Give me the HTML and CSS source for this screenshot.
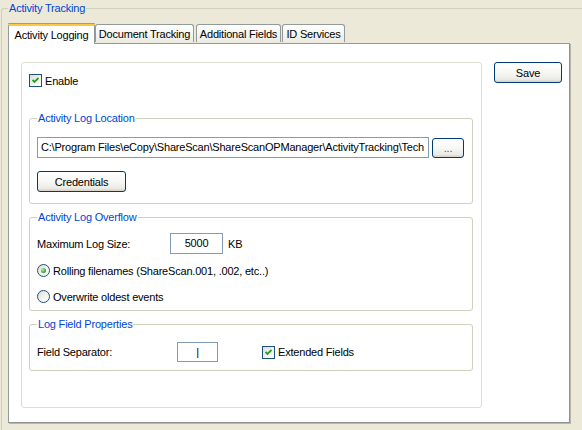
FILE: index.html
```html
<!DOCTYPE html>
<html lang="en">
<head>
    <meta charset="UTF-8">
    <title>Activity Tracking</title>
    <link rel="stylesheet" href="styles.css">
</head>
<body>
    <fieldset class="outer">
        <legend>Activity Tracking</legend>

        <div class="tabs">
            <div class="tab active">Activity Logging</div>
            <div class="tab tab-doc">Document Tracking</div>
            <div class="tab tab-add">Additional Fields</div>
            <div class="tab tab-id">ID Services</div>
        </div>

        <div class="panel">
            <div class="main-group">
                <label class="check-row enable-row">
                    <span class="checkbox checked">
                        <svg width="7" height="7" viewBox="0 0 7 7"><path d="M0.5 3 L2.5 5 L6.5 1" fill="none" stroke="#21a121" stroke-width="1.8"/></svg>
                    </span>
                    Enable
                </label>

                <fieldset class="group loc-group">
                    <legend>Activity Log Location</legend>
                    <div class="path-row">
                        <div class="textbox path">C:\Program Files\eCopy\ShareScan\ShareScanOPManager\ActivityTracking\Tech</div>
                        <button class="xp-btn dots">...</button>
                    </div>
                    <button class="xp-btn cred">Credentials</button>
                </fieldset>

                <fieldset class="group overflow-group">
                    <legend>Activity Log Overflow</legend>
                    <div class="size-row">
                        <span class="size-label">Maximum Log Size:</span>
                        <div class="textbox size">5000</div>
                        <span class="unit">KB</span>
                    </div>
                    <label class="radio-row first">
                        <span class="radio on"></span>
                        Rolling filenames (ShareScan.001, .002, etc..)
                    </label>
                    <label class="radio-row second">
                        <span class="radio"></span>
                        Overwrite oldest events
                    </label>
                </fieldset>

                <fieldset class="group field-group">
                    <legend>Log Field Properties</legend>
                    <div class="sep-row">
                        <span class="sep-label">Field Separator:</span>
                        <div class="textbox sep">|</div>
                        <label class="check-row ext">
                            <span class="checkbox checked">
                                <svg width="7" height="7" viewBox="0 0 7 7"><path d="M0.5 3 L2.5 5 L6.5 1" fill="none" stroke="#21a121" stroke-width="1.8"/></svg>
                            </span>
                            Extended Fields
                        </label>
                    </div>
                </fieldset>
            </div>

            <button class="xp-btn save">Save</button>
        </div>
    </fieldset>
</body>
</html>
```

FILE: styles.css
```css
body {
    margin: 0;
    padding: 0;
    background-color: #ece9d8;
    font-family: "Liberation Sans", Arial, sans-serif;
    font-size: 11px;
    letter-spacing: -0.2px;
    color: #000;
    overflow: hidden;
}

/* group boxes */
fieldset {
    margin: 0;
    min-width: 0;
}

legend {
    color: #0046d5;
    line-height: 13px;
    padding: 0 1px;
}

.outer {
    margin: 2px 0 0 1px;
    padding: 8px 0 0 6px;
    border: 1px solid #d0d0bf;
    border-right: none;
    border-bottom: none;
    border-top-left-radius: 3px;
    height: 500px;
}

.outer > legend {
    margin-left: 0;
}

/* tabs */
.tabs {
    display: flex;
    align-items: flex-end;
    height: 20px;
    position: relative;
    z-index: 1;
}

.tab {
    height: 18px;
    line-height: 18px;
    box-sizing: border-box;
    border: 1px solid #919b9c;
    border-bottom: none;
    border-radius: 3px 3px 0 0;
    background: linear-gradient(#ffffff, #f3f3ef 60%, #ecebe5);
    text-align: center;
    margin-bottom: 1px;
}

.tab.active {
    width: 87px;
    height: 21px;
    line-height: 19px;
    background: #fff;
    border-top: 3px solid #ffc83c;
    margin-bottom: -1px;
    position: relative;
}

.tab.active::before {
    content: "";
    position: absolute;
    left: -1px;
    right: -1px;
    top: -3px;
    height: 1px;
    background: #e68b2c;
    border-radius: 3px 3px 0 0;
}

.tab-doc { width: 99px; }
.tab-add { width: 85px; margin-left: 2px; }
.tab-id { width: 63px; margin-left: 1px; }

.panel {
    width: 562px;
    height: 380px;
    box-sizing: border-box;
    background: #fff;
    border: 1px solid #919b9c;
    border-right-color: #8d9294;
    border-bottom-color: #8d9294;
    box-shadow: 1px 1px 0 #b8b6aa;
    display: flex;
    align-items: flex-start;
    padding: 18px 0 0 12px;
}

/* main group */
.main-group {
    width: 461px;
    height: 346px;
    box-sizing: border-box;
    border: 1px solid #dfddcf;
    border-radius: 3px;
    padding: 11px 8px 0 7px;
}

.check-row {
    display: flex;
    align-items: center;
    gap: 3px;
    height: 13px;
}

.checkbox {
    width: 13px;
    height: 13px;
    box-sizing: border-box;
    border: 1px solid #1c5180;
    background: linear-gradient(135deg, #dcdcd6, #f5f5f3 60%, #ffffff);
    display: flex;
    align-items: center;
    justify-content: center;
}

.enable-row {
    margin-bottom: 25px;
}

.group {
    border: 1px solid #d0d0bf;
    border-radius: 3px;
    padding: 0 7px;
    width: 444px;
    box-sizing: border-box;
}

.group > legend {
    margin-left: 0;
}

.loc-group {
    padding-top: 12px;
    padding-bottom: 11px;
}

.path-row {
    display: flex;
    align-items: center;
    gap: 3px;
    margin-bottom: 13px;
}

.textbox {
    box-sizing: border-box;
    border: 1px solid #7f9db9;
    background: #fff;
    height: 21px;
    line-height: 19px;
    white-space: nowrap;
    overflow: hidden;
}

.path {
    width: 392px;
    padding-left: 3px;
}

.xp-btn {
    font-family: inherit;
    font-size: 11px;
    letter-spacing: -0.2px;
    color: #000;
    border: 1px solid #003c74;
    border-radius: 3px;
    background: linear-gradient(#ffffff, #f7f7f4 50%, #ecebe6 85%, #d6d0c5);
    padding: 0;
    height: 21px;
    box-sizing: border-box;
    display: block;
}

.dots {
    width: 32px;
    height: 20px;
    color: #555;
}

.cred {
    width: 89px;
}

.overflow-group {
    margin-top: 7px;
    padding-top: 9px;
    padding-bottom: 7px;
}

.size-row {
    display: flex;
    align-items: center;
    height: 21px;
}

.size-label {
    width: 133px;
}

.size {
    width: 53px;
    text-align: center;
}

.unit {
    margin-left: 5px;
}

.radio-row {
    display: flex;
    align-items: center;
    gap: 3px;
    height: 13px;
}

.radio-row.first {
    margin-top: 10px;
}

.radio-row.second {
    margin-top: 13px;
}

.radio {
    width: 13px;
    height: 13px;
    box-sizing: border-box;
    border: 1px solid #1c5180;
    border-radius: 50%;
    background: linear-gradient(135deg, #dcdcd6, #f5f5f3 60%, #ffffff);
    display: flex;
    align-items: center;
    justify-content: center;
}

.radio.on::after {
    content: "";
    width: 5px;
    height: 5px;
    border-radius: 50%;
    background: radial-gradient(circle at 35% 35%, #b8f0b0, #21a121 70%);
}

.field-group {
    margin-top: 7px;
    padding-top: 11px;
    padding-bottom: 8px;
}

.sep-row {
    display: flex;
    align-items: center;
    height: 20px;
}

.sep-label {
    width: 140px;
}

.sep {
    width: 41px;
    height: 20px;
    text-align: center;
}

.ext {
    margin-left: 44px;
}

.save {
    width: 68px;
    margin: 0 0 0 12px;
}
```
